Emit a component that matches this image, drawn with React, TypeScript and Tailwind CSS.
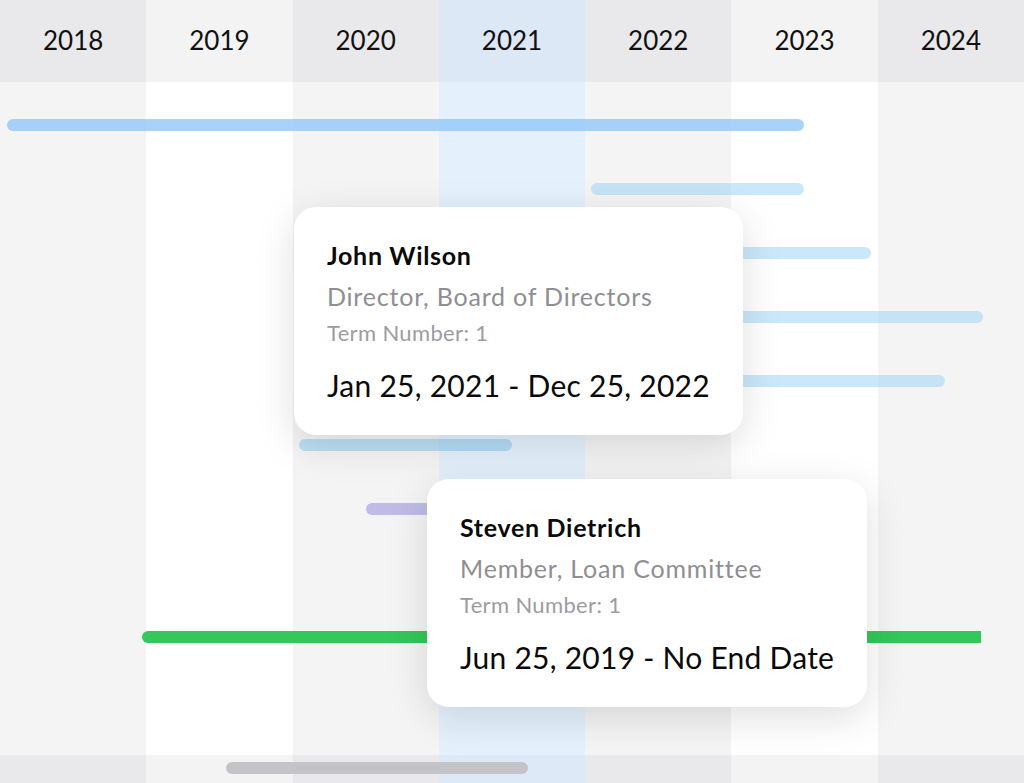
import React from "react";

type Col = { year: string; head: string; body: string; foot: string };

const cols: Col[] = [
  { year: "2018", head: "bg-[#e9e9eb]", body: "bg-[#f4f4f5]", foot: "bg-[#e9e9eb]" },
  { year: "2019", head: "bg-[#f3f3f4]", body: "bg-white", foot: "bg-[#f3f3f4]" },
  { year: "2020", head: "bg-[#e9e9eb]", body: "bg-[#f4f4f5]", foot: "bg-[#e9e9eb]" },
  { year: "2021", head: "bg-[#dce8f5]", body: "bg-[#e4f1fd]", foot: "bg-[#dde9f6]" },
  { year: "2022", head: "bg-[#e9e9eb]", body: "bg-[#f4f4f5]", foot: "bg-[#e9e9eb]" },
  { year: "2023", head: "bg-[#f3f3f4]", body: "bg-white", foot: "bg-[#f3f3f4]" },
  { year: "2024", head: "bg-[#e9e9eb]", body: "bg-[#f4f4f5]", foot: "bg-[#e9e9eb]" },
];

type Bar = { left: number; width: number; color: string; shape: string } | null;

const bars: Bar[] = [
  { left: 7, width: 797, color: "bg-[rgba(140,195,250,0.75)]", shape: "rounded-full" },
  { left: 591, width: 213, color: "bg-[rgba(150,210,245,0.5)]", shape: "rounded-full" },
  { left: 520, width: 351, color: "bg-[rgba(150,210,245,0.5)]", shape: "rounded-full" },
  { left: 450, width: 533, color: "bg-[rgba(150,210,245,0.5)]", shape: "rounded-full" },
  { left: 480, width: 465, color: "bg-[rgba(150,210,245,0.5)]", shape: "rounded-full" },
  { left: 299, width: 213, color: "bg-[rgba(130,200,240,0.5)]", shape: "rounded-full" },
  { left: 366, width: 234, color: "bg-[rgba(150,150,220,0.6)]", shape: "rounded-full" },
  { left: 520, width: 260, color: "bg-[rgba(150,210,245,0.5)]", shape: "rounded-full" },
  { left: 142, width: 839, color: "bg-[#34c759]", shape: "rounded-l-full" },
];

function Card({
  name,
  role,
  term,
  dates,
  pos,
}: {
  name: string;
  role: string;
  term: string;
  dates: string;
  pos: string;
}) {
  return (
    <div
      className={`absolute ${pos} bg-white rounded-[22px] px-[33px] pt-[33px] pb-[32px] shadow-[0_10px_40px_rgba(0,0,0,0.13)]`}
    >
      <div className="text-[25px] leading-[30px] font-bold tracking-[0.7px] text-[#0a0a0a] whitespace-nowrap">{name}</div>
      <div className="mt-[11px] text-[25px] leading-[30px] tracking-[0.8px] text-[#8e8e93] whitespace-nowrap">{role}</div>
      <div className="mt-[9px] text-[22px] leading-[26px] tracking-[0.35px] text-[#9c9ca1] whitespace-nowrap">{term}</div>
      <div className="mt-[21px] text-[30px] leading-[36px] tracking-[0.25px] text-[#0a0a0a] whitespace-nowrap">{dates}</div>
    </div>
  );
}

export default function App() {
  return (
    <div className="relative w-[1024px] h-[783px] overflow-hidden grid font-['Lato',_'Liberation_Sans',_sans-serif]">
      <div className="col-start-1 row-start-1 flex">
        {cols.map((c) => (
          <div key={c.year} className="flex-1 flex flex-col">
            <div className={`h-[82px] flex items-center justify-center pb-[2px] text-[26px] text-[#111] ${c.head}`}>
              {c.year}
            </div>
            <div className={`flex-1 ${c.body}`} />
            <div className={`h-[28px] ${c.foot}`} />
          </div>
        ))}
      </div>

      <div className="col-start-1 row-start-1 flex flex-col pt-[119px] gap-[52px]">
        {bars.map((b, i) => (
          <div key={i} className="h-[12px] flex">
            {b && (
              <div
                className={`h-[12px] ${b.color} ${b.shape}`}
                style={{ marginLeft: b.left, width: b.width }}
              />
            )}
          </div>
        ))}
      </div>

      <Card
        pos="left-[294px] top-[207px]"
        name="John Wilson"
        role="Director, Board of Directors"
        term="Term Number: 1"
        dates="Jan 25, 2021 - Dec 25, 2022"
      />
      <Card
        pos="left-[427px] top-[479px]"
        name="Steven Dietrich"
        role="Member, Loan Committee"
        term="Term Number: 1"
        dates="Jun 25, 2019 - No End Date"
      />

      <div className="absolute left-[226px] top-[762px] w-[302px] h-[12px] rounded-full bg-[#c4c3c8]" />
    </div>
  );
}
